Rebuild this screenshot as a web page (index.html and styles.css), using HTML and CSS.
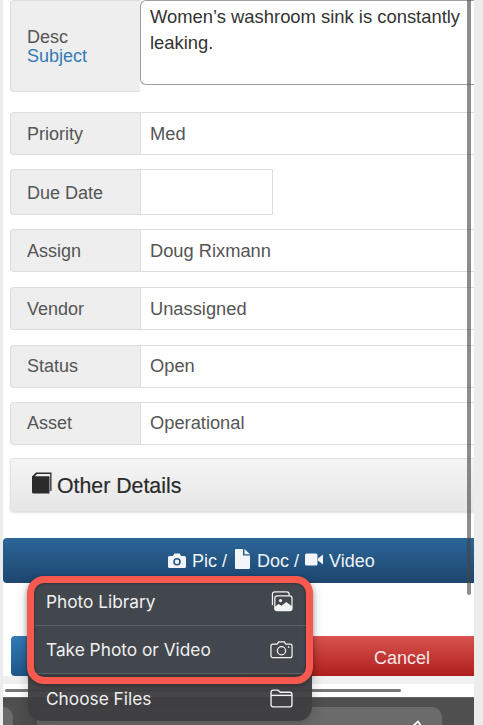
FILE: index.html
```html
<!DOCTYPE html>
<html lang="en">
<head>
<meta charset="utf-8">
<title>Work order</title>
<link rel="stylesheet" href="styles.css">
</head>
<body>
<div class="screen">
  <main class="page">
    <section class="form">
      <div class="row row-desc">
        <div class="label label-desc"><span>Desc</span><a class="link">Subject</a></div>
        <div class="textarea">Women’s washroom sink is constantly leaking.</div>
      </div>
      <div class="row row-priority"><div class="label">Priority</div><div class="value">Med</div></div>
      <div class="row row-date"><div class="label">Due Date</div><div class="value value-short"></div></div>
      <div class="row"><div class="label">Assign</div><div class="value">Doug Rixmann</div></div>
      <div class="row"><div class="label">Vendor</div><div class="value">Unassigned</div></div>
      <div class="row row-status"><div class="label">Status</div><div class="value">Open</div></div>
      <div class="row row-asset"><div class="label">Asset</div><div class="value">Operational</div></div>
      <div class="details">
        <svg class="book" viewBox="0 0 20 22"><path fill="#2b2b2b" d="M0 4.500 4 .5h15.500v18.500h-1.300V2H5L2.800 4.300H17.500V21.500H1.500Q0 21.500 0 20z"/></svg>
        <span>Other Details</span>
      </div>
    </section>
    <div class="upload">
      <svg class="ic-cam" viewBox="0 0 18 15"><path fill="#f2f6fa" d="M1.500 3H5L6.300.5h5.400L13 3h3.500A1.500 1.500 0 0 1 18 4.500v9a1.500 1.500 0 0 1-1.500 1.500h-15A1.500 1.500 0 0 1 0 13.500v-9A1.500 1.500 0 0 1 1.500 3z"/><circle cx="9" cy="8.800" r="3.800" fill="#24567f"/><circle cx="9" cy="8.800" r="2.200" fill="#f2f6fa"/></svg>
      <span class="t-pic">Pic /</span>
      <svg class="ic-doc" viewBox="0 0 15 20"><path fill="#f2f6fa" d="M0 1a1 1 0 0 1 1-1h7v6.500h7V19a1 1 0 0 1-1 1H1a1 1 0 0 1-1-1z"/><path fill="#f2f6fa" d="M9.500 0 15 5.200H9.500z"/></svg>
      <span class="t-doc">Doc /</span>
      <svg class="ic-vid" viewBox="0 0 18 13"><rect width="12.500" height="12" y=".5" rx="1.500" fill="#f2f6fa"/><path fill="#f2f6fa" d="M13 5.500 18 1.500v10l-5-4z"/></svg>
      <span class="t-vid">Video</span>
    </div>
    <div class="actions">
      <button class="btn btn-save" type="button"></button>
      <button class="btn btn-cancel" type="button">Cancel</button>
    </div>
    <div class="band"></div>
    <div class="hscroll"><i></i></div>
    <div class="toolbar"><div class="back"></div><div class="address"><svg class="go" viewBox="0 0 10 8"><path d="M1 6 6 1.500 9 6" fill="none" stroke="#fff" stroke-width="1.800"/></svg></div></div>
  </main>

  <div class="vscroll"></div>

  <div class="menu">
    <div class="menu-item"><span>Photo Library</span>
      <svg class="mi" viewBox="0 0 24 22" fill="none" stroke="#f3f3f3" stroke-width="1.300"><path d="M2.500 15V3.500Q2.500 1 5 1H17.500Q20 1 20 3.500V5"/><rect x="5" y="5" width="18" height="15.500" rx="2.500"/><circle cx="11" cy="10" r="1.700" fill="#f3f3f3" stroke="none"/><path fill="#f3f3f3" stroke="none" d="M5 20V16.500L9 13.500 12 15.500 17 11.500 23 16V20z"/></svg>
    </div>
    <div class="menu-item"><span>Take Photo or Video</span>
      <svg class="mi" viewBox="0 0 24 19" fill="none" stroke="#f3f3f3" stroke-width="1.300"><path d="M3 4H7.500L9 1.500H15L16.500 4H21A2 2 0 0 1 23 6V16A2 2 0 0 1 21 18H3A2 2 0 0 1 1 16V6A2 2 0 0 1 3 4z"/><circle cx="12" cy="10.800" r="4.300"/><circle cx="19.500" cy="7" r=".9" fill="#f3f3f3" stroke="none"/></svg>
    </div>
    <div class="menu-item"><span>Choose Files</span>
      <svg class="mi" viewBox="0 0 22 18" fill="none" stroke="#f3f3f3" stroke-width="1.300"><path d="M1 5V3Q1 1 3 1H7.500L10 3H19Q21 3 21 5V15Q21 17 19 17H3Q1 17 1 15z"/><path d="M1 6H21"/></svg>
    </div>
  </div>
  <div class="highlight"></div>
</div>
</body>
</html>
```
FILE: styles.css
```css
* { box-sizing: border-box; }
html, body { margin: 0; padding: 0; height: 725px; overflow: hidden; }
body { background: #ececec; font-family: "Liberation Sans", Arial, sans-serif; font-size: 18px; color: #555; }
.screen { position: relative; width: 483px; height: 725px; overflow: hidden; padding: 0 9px 0 3px; }
.page { background: #fff; height: 725px; display: flex; flex-direction: column; overflow: hidden; }
.page > * { flex: none; }

.form { padding-left: 7px; display: flex; flex-direction: column; }
.row { display: flex; flex: none; height: 43px; margin-bottom: 15px; }
.label { width: 130px; flex: none; background: #eee; border: 1px solid #ddd; border-right: 0; border-radius: 4px 0 0 4px; padding: 1px 0 0 16px; display: flex; align-items: center; color: #555; }
.value { flex: 1; background: #fff; border: 1px solid #ddd; border-right: 0; padding: 0 0 0 9px; display: flex; align-items: center; color: #555; font-size: 18.300px; }
.value-short { flex: none; width: 133px; border-right: 1px solid #ddd; }

.row-desc { height: 92px; margin-bottom: 20px; }
.label-desc { flex-direction: column; align-items: flex-start; justify-content: center; line-height: 19px; padding-top: 2px; }
.link { color: #337ab7; }
.textarea { flex: 1; height: 85px; background: #fff; border: 1px solid #a0a0a0; border-right: 0; border-radius: 6px 0 0 6px; padding: 3px 0 0 9px; color: #333; line-height: 26px; font-size: 18.400px; }

.row-priority { margin-bottom: 14px; }
.row-date { height: 46px; margin-bottom: 14px; }
.row-date .label { padding-top: 3px; }
.row-status { margin-bottom: 14px; }
.row-status .label, .row-asset .label { padding-top: 0; }
.row-status .value, .row-asset .value { padding-bottom: 2px; }
.row-asset { margin-bottom: 13px; }

.details { height: 54px; background: linear-gradient(#f5f5f5, #e6e6e6); border: 1px solid #e2e2e2; border-right: 0; border-radius: 4px 0 0 4px; box-shadow: 0 1px 2px rgba(0,0,0,.12); padding: 3px 0 0 21px; display: flex; align-items: center; gap: 5px; font-size: 21.300px; color: #2a2a2a; -webkit-text-stroke: .2px #2a2a2a; }
.book { width: 20px; height: 22px; margin-top: -7px; }

.upload { margin-top: 26px; height: 45px; background: linear-gradient(#2c6698, #1d4670); border-radius: 4px 0 0 4px; display: flex; align-items: center; padding: 2px 0 0 165px; color: #eef3f8; }
.ic-cam { width: 18px; height: 15px; margin-top: -3px; margin-right: 6px; }
.t-pic { margin-right: 8px; }
.ic-doc { width: 15px; height: 20px; margin-top: -5px; margin-right: 7px; }
.t-doc { margin-right: 6px; }
.ic-vid { width: 18px; height: 13px; margin-top: -4px; margin-right: 6px; }

.actions { margin: 53px 0 0 8px; height: 40px; display: flex; }
.btn { flex: 1; border: 0; font: inherit; color: #f6e7e7; padding: 0; }
.btn-save { background: linear-gradient(#337ab7, #1f5788); border-radius: 4px 0 0 4px; color: #fff; }
.btn-cancel { background: linear-gradient(#d9534f, #ad1f1c); flex: none; width: 232px; padding: 4px 0 0 88px; }

.band { height: 8px; background: #f0f0f0; }
.hscroll { height: 13px; background: #fff; padding: 5px 0 0 2px; }
.hscroll i { display: block; width: 396px; height: 3px; border-radius: 2px; background: #777; }
.toolbar { height: 28px; background: #4f4f4f; position: relative; padding: 9px 32px 0 21px; display: flex; gap: 10px; border-top: 1px solid #666; }
.back { width: 10px; background: #6b6b6b; border-radius: 0 10px 0 0; margin-left: -21px; }
.address { flex: 1; height: 40px; background: #6b6b6b; border-radius: 10px 10px 0 0; position: relative; margin-left: 14px; }
.go { position: absolute; right: 20px; top: 13px; width: 10px; height: 8px; }

.vscroll { position: absolute; left: 467px; top: 0; width: 4px; height: 595px; background: rgba(70,70,70,.62); border-radius: 0 0 2px 2px; }

.menu { position: absolute; left: 28px; top: 578px; width: 284px; height: 143px; background: rgba(62,62,66,.96); border-radius: 14px; box-shadow: 0 4px 14px rgba(0,0,0,.2); display: flex; flex-direction: column; }
.menu-item { height: 48px; flex: none; padding: 0 19px 0 18px; display: flex; align-items: center; justify-content: space-between; color: #f0f0f0; font-family: Inter, "Liberation Sans", sans-serif; font-size: 17.300px; border-bottom: 1px solid #5d6268; }
.menu-item:nth-child(1), .menu-item:nth-child(2) { background: #42474e; }
.menu-item:nth-child(1) { border-radius: 14px 14px 0 0; }
.menu-item:nth-child(3) { border-bottom: 0; }
.mi { width: 23px; height: 21px; }
.highlight { position: absolute; left: 27px; top: 576px; width: 286px; height: 108px; border: 7px solid #f8594e; border-radius: 17px; box-shadow: 0 2px 5px rgba(0,0,0,.35), inset 0 0 3px rgba(0,0,0,.5); }
```
